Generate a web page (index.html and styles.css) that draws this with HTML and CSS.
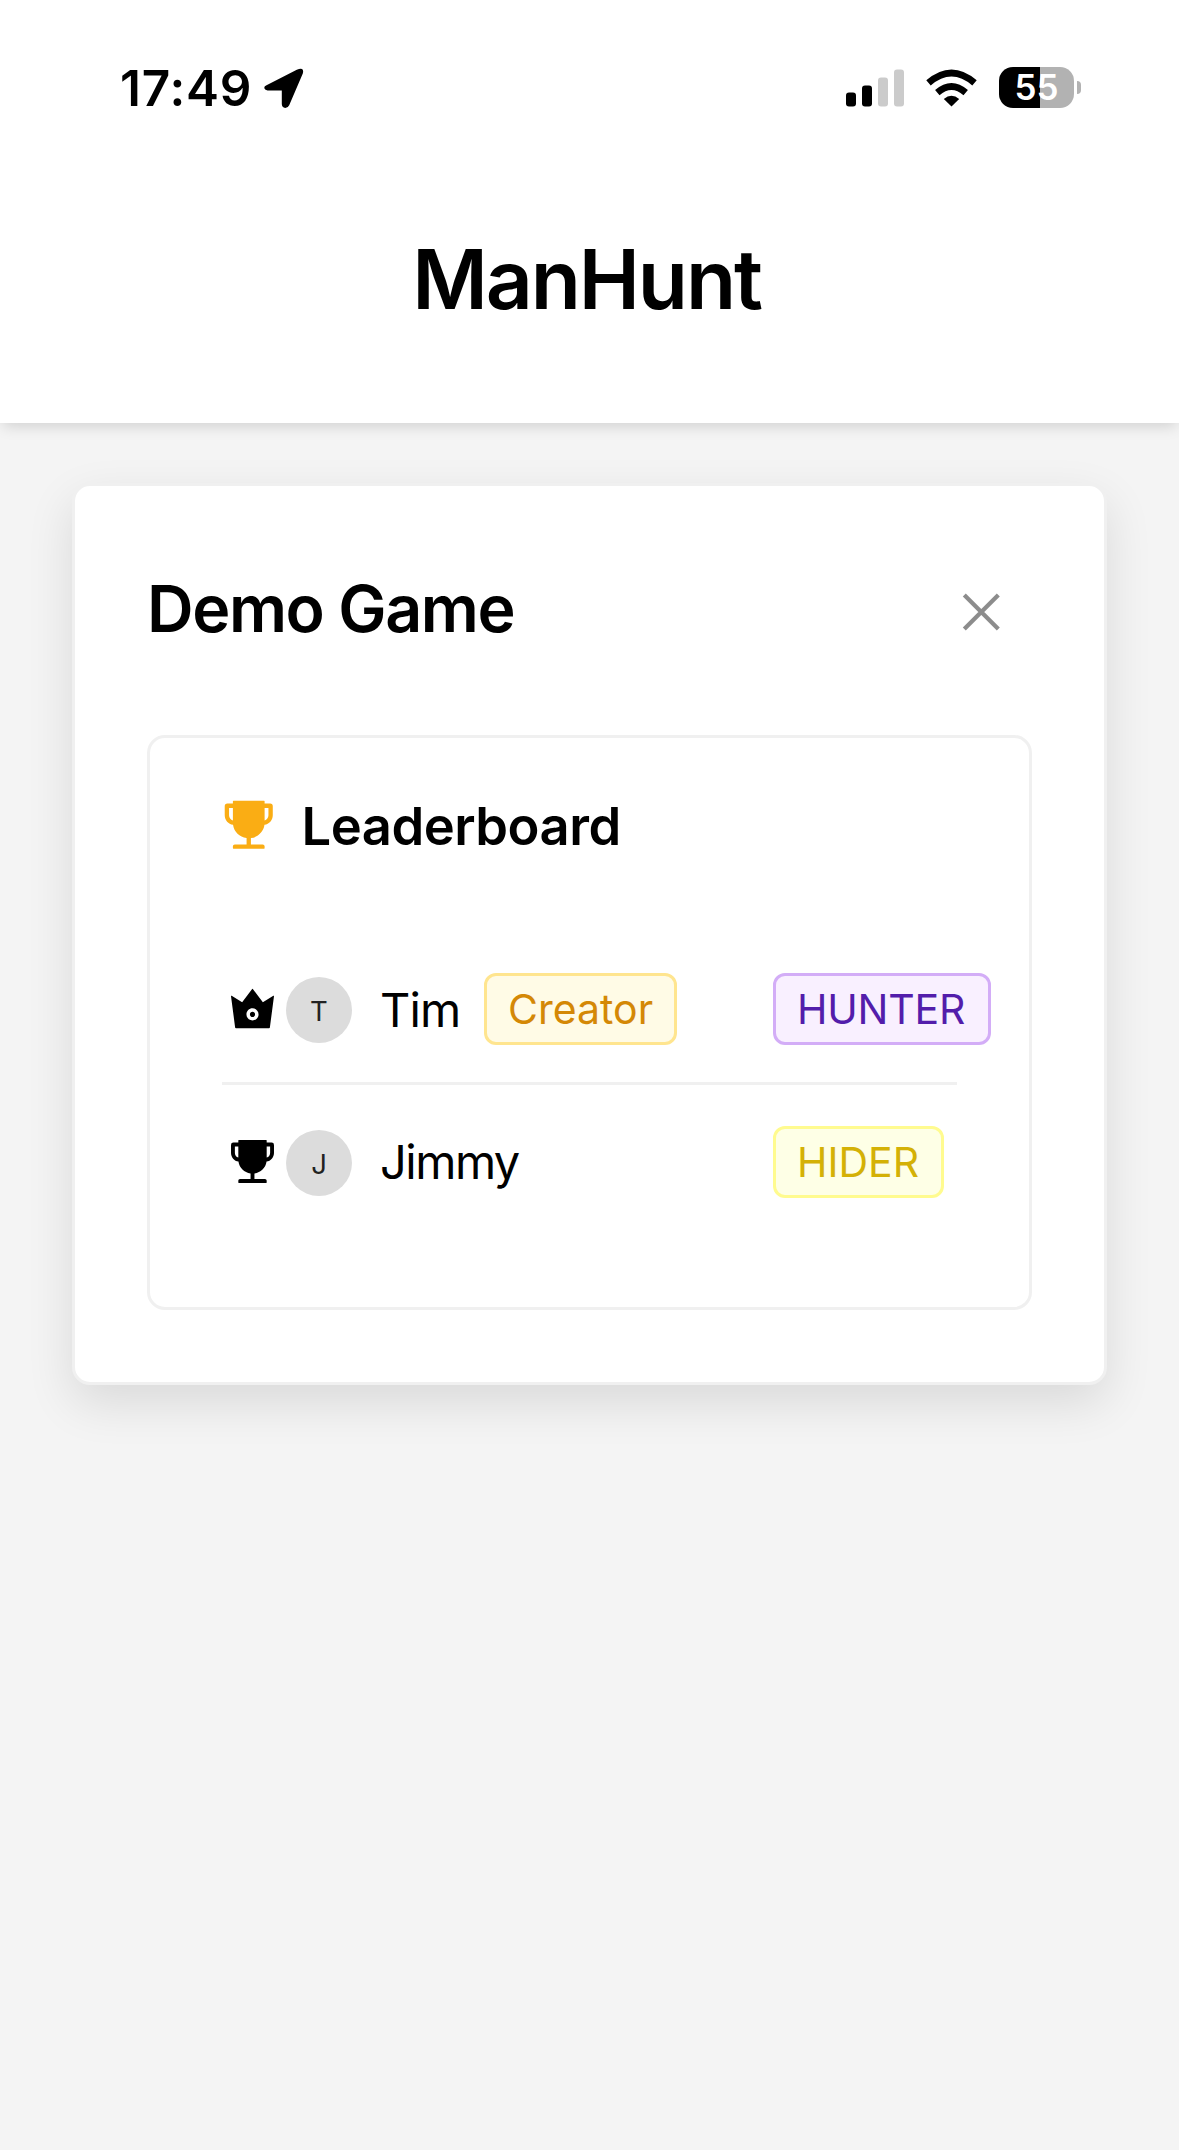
FILE: index.html
```
<!DOCTYPE html>
<html lang="en">
<head>
<meta charset="utf-8">
<title>ManHunt</title>
<link rel="stylesheet" href="styles.css">
</head>
<body>
<header class="header">
  <div class="statusbar">
    <div class="clock">
      <span class="time">17:49</span>
      <svg class="location" width="40" height="40" viewBox="0 0 40 40"><path d="M3.5 16.200 33.800.700Q37.400-.700 39 0 40.800 1.200 39.800 4.600L26.200 36.200Q24.800 39 22.300 39 18.800 38.600 18.800 35V21.400H4.600Q1.500 21.200 1.300 18.600 1.300 17 3.500 16.200Z"/></svg>
    </div>
    <div class="indicators">
      <svg class="signal" width="59" height="38" viewBox="0 0 59 38"><rect y="23.500" width="10" height="14" rx="3"/><rect x="16" y="16.500" width="10" height="21" rx="3"/><g fill="#cbcbcb"><rect x="32" y="8.500" width="10" height="29" rx="3"/><rect x="48" y="0.500" width="10" height="37" rx="3"/></g></svg>
      <svg class="wifi" width="52" height="38" viewBox="0 0 52 38"><path d="M25.500 37.500 17.800 29.900Q25.500 23.500 33.200 29.900Z"/><g fill="none" stroke="#000" stroke-width="6.800"><path d="M11.300 23.600Q25.500 11.400 39.700 23.600"/><path d="M2.500 13.900Q25.500-5.900 48.500 13.900"/></g></svg>
      <div class="battery"><span class="battery-body">55</span><span class="battery-tip"></span></div>
    </div>
  </div>
  <h1 class="app-title">ManHunt</h1>
</header>
<main class="content">
  <section class="card">
    <div class="card-head">
      <h2 class="game-title">Demo Game</h2>
      <svg class="close" width="38" height="38" viewBox="0 0 38 38"><path d="M2.300 2 36.300 36M36.300 2 2.300 36"/></svg>
    </div>
    <div class="board">
      <div class="board-head">
        <svg class="cup" width="61.500" height="61.500" viewBox="0 0 1024 1024"><path d="M868 160h-92v-40c0-4.400-3.600-8-8-8H256c-4.400 0-8 3.600-8 8v40h-92a44 44 0 0 0-44 44v148c0 81.700 60 149.600 138.200 162C265.600 630.200 359 721.800 476 734.500v105.200H280c-17.700 0-32 14.300-32 32V904c0 4.400 3.600 8 8 8h512c4.400 0 8-3.600 8-8v-32.300c0-17.700-14.300-32-32-32H548V734.500C665 721.700 758.400 630.200 773.800 514 852 501.600 912 433.700 912 352V204a44 44 0 0 0-44-44zM248 439.600c-37.100-11.900-64-46.700-64-87.600V232h64v207.600zM840 352c0 41-26.900 75.800-64 87.600V232h64v120z"/></svg>
        <h3 class="board-title">Leaderboard</h3>
      </div>
      <ul class="players">
        <li class="player">
          <svg class="rank" width="55" height="55" viewBox="0 0 1024 1024"><path d="M899.600 276.500 705 396.400 518.400 147.500a8.060 8.060 0 0 0-12.900 0L319 396.400 124.300 276.500c-5.700-3.500-13.100 1.200-12.200 7.900L188.500 865c1.100 7.900 7.900 14 16 14h615.100c8 0 14.900-6 15.900-14l76.400-580.600c.8-6.700-5.400-11.400-12.300-7.900zM512 734.200c-62.100 0-112.600-50.500-112.600-112.600S449.900 509 512 509s112.600 50.500 112.600 112.600S574.100 734.200 512 734.200zm0-160.900c-26.600 0-48.200 21.600-48.200 48.300 0 26.600 21.600 48.300 48.200 48.300s48.200-21.600 48.200-48.300c0-26.600-21.600-48.300-48.200-48.300z"/></svg>
          <span class="avatar">T</span>
          <span class="identity"><span class="name">Tim</span><span class="tag tag-creator">Creator</span></span>
          <span class="tag tag-hunter">HUNTER</span>
        </li>
        <li class="player">
          <svg class="rank" width="55" height="55" viewBox="0 0 1024 1024"><path d="M868 160h-92v-40c0-4.400-3.600-8-8-8H256c-4.400 0-8 3.600-8 8v40h-92a44 44 0 0 0-44 44v148c0 81.700 60 149.600 138.200 162C265.600 630.200 359 721.800 476 734.500v105.200H280c-17.700 0-32 14.300-32 32V904c0 4.400 3.600 8 8 8h512c4.400 0 8-3.600 8-8v-32.300c0-17.700-14.300-32-32-32H548V734.500C665 721.700 758.400 630.200 773.800 514 852 501.600 912 433.700 912 352V204a44 44 0 0 0-44-44zM248 439.600c-37.100-11.900-64-46.700-64-87.600V232h64v207.600zM840 352c0 41-26.900 75.800-64 87.600V232h64v120z"/></svg>
          <span class="avatar">J</span>
          <span class="identity"><span class="name">Jimmy</span></span>
          <span class="tag tag-hider">HIDER</span>
        </li>
      </ul>
    </div>
  </section>
</main>
</body>
</html>
```
FILE: styles.css
```
* { box-sizing: border-box; }
body {
  margin: 0;
  min-height: 2150px;
  background: #f4f4f4;
  color: #000;
  font-family: Inter, "Liberation Sans", sans-serif;
}
h1, h2, h3, ul { margin: 0; padding: 0; font-weight: 600; }
svg { display: block; flex: none; overflow: visible; }
.header {
  height: 423px;
  background: #fff;
  box-shadow: 0 6px 14px -3px rgba(0, 0, 0, 0.15);
}
.statusbar {
  height: 176px;
  padding: 0 98px 0 120px;
  display: flex;
  justify-content: space-between;
  align-items: center;
}
.clock, .indicators { display: flex; align-items: center; }
.time { font-size: 49.5px; font-weight: 600; line-height: 60px; letter-spacing: 0.8px; }
.location { margin: 2px 0 0 11px; }
.signal { margin: 0 21px 1px 0; }
.wifi { margin: 0 21px 1px 0; }
.battery { display: flex; align-items: center; gap: 3px; margin-bottom: 1px; }
.battery-body {
  width: 75px;
  height: 41px;
  border-radius: 14px;
  background: linear-gradient(90deg, #000 41px, #b2b2b2 41px);
  color: #fff;
  font-size: 35px;
  font-weight: 600;
  line-height: 41px;
  text-align: center;
}
.battery-tip { width: 4px; height: 13px; border-radius: 0 4px 4px 0; background: #b2b2b2; }
.app-title {
  padding: 54px 6px 0 0;
  font-size: 82px;
  line-height: 100px;
  letter-spacing: -2.1px;
  text-align: center;
}
.content { padding: 60px 72px 0; }
.card {
  height: 902px;
  padding: 0 72px;
  border: 3px solid #f0f0f0;
  border-radius: 18px;
  background: #fff;
  box-shadow: 0 18px 48px rgba(0, 0, 0, 0.11);
}
.card-head {
  height: 249px;
  padding-right: 32px;
  display: flex;
  align-items: center;
  justify-content: space-between;
}
.game-title { font-size: 64.5px; line-height: 80px; letter-spacing: -1.4px; margin-bottom: 3px; }
.close { fill: none; stroke: #8c8c8c; stroke-width: 4.2; margin-top: 3px; }
.board {
  height: 575px;
  border: 3px solid #f0f0f0;
  border-radius: 18px;
  padding: 54px 72px 0;
}
.board-head { display: flex; align-items: center; height: 66px; margin-left: -4px; }
.cup { fill: #faad14; }
.board-title { font-size: 52.5px; line-height: 66px; letter-spacing: -0.5px; margin: 2px 0 0 22px; }
.players { list-style: none; padding-top: 78px; font-weight: 400; }
.player { display: flex; align-items: center; height: 154px; padding-left: 3px; }
.player:first-child { height: 149px; border-bottom: 3px solid #f0f0f0; }
.rank { margin-bottom: 2px; }
.avatar {
  flex: none;
  width: 66px;
  height: 66px;
  margin: 2px 0 0 6px;
  border-radius: 50%;
  background: #dcdcdc;
  color: #222;
  font-size: 27.5px;
  line-height: 68px;
  text-align: center;
}
.identity { flex: none; display: flex; align-items: center; width: 393px; margin-left: 28px; }
.name { font-size: 47px; letter-spacing: -0.8px; }
.player:last-child .name { letter-spacing: -1.5px; margin-bottom: 2px; }
.tag {
  flex: none;
  height: 72px;
  padding: 0 21px;
  border: 3px solid;
  border-radius: 12px;
  font-size: 41px;
  line-height: 66px;
}
.tag-creator { margin-left: 23.5px; color: #d48806; background: #fffbe6; border-color: #ffe58f; }
.tag-hunter { padding-right: 23px; letter-spacing: -0.2px; color: #531dab; background: #f9f0ff; border-color: #d3adf7; }
.tag-hider { padding-right: 22px; color: #d4b106; background: #feffe6; border-color: #fffb8f; }
```
